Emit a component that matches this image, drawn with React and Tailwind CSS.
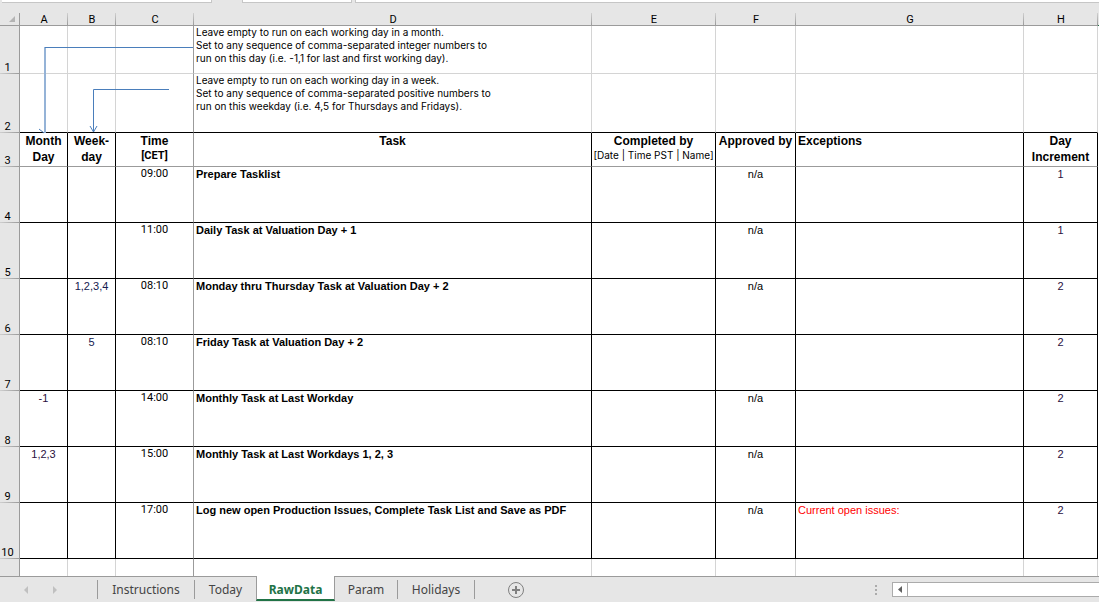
const LETTERS = ["A", "B", "C", "D", "E", "F", "G", "H"];

const TASKS = [
  { row: 4, time: "09:00", task: "Prepare Tasklist", approved: "n/a", increment: 1 },
  { row: 5, time: "11:00", task: "Daily Task at Valuation Day + 1", approved: "n/a", increment: 1 },
  { row: 6, weekday: "1,2,3,4", time: "08:10", task: "Monday thru Thursday Task at Valuation Day + 2", approved: "n/a", increment: 2 },
  { row: 7, weekday: "5", time: "08:10", task: "Friday Task at Valuation Day + 2", increment: 2 },
  { row: 8, monthDay: "-1", time: "14:00", task: "Monthly Task at Last Workday", approved: "n/a", increment: 2 },
  { row: 9, monthDay: "1,2,3", time: "15:00", task: "Monthly Task at Last Workdays 1, 2, 3", approved: "n/a", increment: 2 },
  {
    row: 10,
    time: "17:00",
    task: "Log new open Production Issues, Complete Task List and Save as PDF",
    approved: "n/a",
    exceptions: "Current open issues:",
    increment: 2,
  },
];

const RowNumber = ({ children }) => (
  <th
    scope="row"
    className="border-r border-[#9b9b9b] bg-[#e6e6e6] bg-[linear-gradient(to_right,#cfcfcf,#9b9b9b)] bg-[length:100%_1px] bg-bottom bg-no-repeat pr-1 align-bottom font-['Roboto',sans-serif] font-normal leading-[13px]"
  >
    {children}
  </th>
);

const GridCell = ({ children, frozen }) => (
  <td
    className={`border-r border-b border-b-[#d4d4d4] px-0.5 text-left align-top font-['Inter',sans-serif] text-[10px] leading-[13px] ${
      frozen ? "border-r-[#9b9b9b]" : "border-r-[#d4d4d4]"
    }`}
  >
    {children}
  </td>
);

const HeadCell = ({ children, className = "" }) => (
  <th
    scope="col"
    className={`border-r border-b border-b-[#9b9b9b] align-top text-xs font-bold leading-4 ${className || "border-r-black"}`}
  >
    {children}
  </th>
);

const TaskCell = ({ children, className = "pt-px" }) => (
  <td className={`border-r border-b border-black align-top leading-[13px] ${className}`}>
    {children}
  </td>
);

// Connectors from the notes in column D to the Month Day / Weekday headings
const Connectors = () => (
  <svg
    className="pointer-events-none absolute top-0 left-5"
    width="173"
    height="121"
    fill="none"
    stroke="#4a7ebb"
    aria-hidden="true"
  >
    <path d="M25 34V120" stroke="#95b3d7" strokeWidth="2" />
    <path d="M173 34.5H25" />
    <path d="M19 116l5 4" />
    <path d="M149 76.5H73.5V119" />
    <path d="M70 113l3.5 6 3.5-6" />
  </svg>
);

const FormulaBar = () => (
  <div className="flex h-[13px] items-start">
    <div className="ml-0.5 h-[3px] w-[210px] border-r border-b border-[#c6c6c6] bg-white" />
    <div className="ml-[30px] h-[3px] w-[110px] border-x border-b border-[#c6c6c6] bg-white" />
    <div className="ml-[3px] h-[3px] grow border-b border-l border-[#c6c6c6] bg-white" />
  </div>
);

const Sheet = () => (
  <div className="relative">
    <table className="w-full table-fixed border-separate border-spacing-0 bg-white text-center text-[11px] text-black">
      <colgroup>
        <col className="w-5" />
        <col className="w-12" />
        <col className="w-12" />
        <col className="w-[78px]" />
        <col />
        <col className="w-[124px]" />
        <col className="w-20" />
        <col className="w-[228px]" />
        <col className="w-[74px]" />
        <col className="w-px" />
      </colgroup>
      <tbody>
        <tr className="h-[13px] bg-[#e6e6e6]">
          <td className="border-r border-b border-[#9b9b9b] pr-1">
            <svg className="ml-auto" width="6" height="6" aria-hidden="true">
              <path d="M6 0V6H0Z" fill="#b4b4b4" />
            </svg>
          </td>
          {LETTERS.map((letter) => (
            <th
              key={letter}
              scope="col"
              className="border-b border-[#9b9b9b] bg-[linear-gradient(#cfcfcf,#9b9b9b)] bg-[length:1px_100%] bg-right bg-no-repeat pt-0.5 font-['Roboto',sans-serif] font-normal leading-[10px]"
            >
              {letter}
            </th>
          ))}
          <td className="border-b border-[#217346]" />
        </tr>
        <tr className="h-12">
          <RowNumber>1</RowNumber>
          <GridCell />
          <GridCell />
          <GridCell frozen />
          <GridCell>
            Leave empty to run on each working day in a month.
            <br />
            Set to any sequence of comma-separated integer numbers to
            <br />
            run on this day (i.e. -1,1 for last and first working day).
          </GridCell>
          <GridCell />
          <GridCell />
          <GridCell />
          <GridCell />
          <td />
        </tr>
        <tr className="h-[59px] [&>td]:border-b-black">
          <RowNumber>2</RowNumber>
          <GridCell />
          <GridCell />
          <GridCell frozen />
          <GridCell>
            Leave empty to run on each working day in a week.
            <br />
            Set to any sequence of comma-separated positive numbers to
            <br />
            run on this weekday (i.e. 4,5 for Thursdays and Fridays).
          </GridCell>
          <GridCell />
          <GridCell />
          <GridCell />
          <GridCell />
          <td />
        </tr>
        <tr className="h-[34px]">
          <RowNumber>3</RowNumber>
          <HeadCell>
            Month
            <br />
            Day
          </HeadCell>
          <HeadCell>
            Week-
            <br />
            day
          </HeadCell>
          <HeadCell className="border-r-[#9b9b9b]">
            Time
            <div className="font-['Roboto',sans-serif] text-[11px] leading-[13px]">[CET]</div>
          </HeadCell>
          <HeadCell>Task</HeadCell>
          <HeadCell>
            Completed by
            <div className="font-['Inter',sans-serif] text-[10px] font-normal leading-[13px]">
              [Date | Time PST | Name]
            </div>
          </HeadCell>
          <HeadCell>Approved by</HeadCell>
          <HeadCell className="border-r-black pl-0.5 text-left">Exceptions</HeadCell>
          <HeadCell>
            Day
            <br />
            Increment
          </HeadCell>
          <td />
        </tr>
        {TASKS.map((t) => (
          <tr key={t.row} className="h-14">
            <RowNumber>{t.row}</RowNumber>
            <TaskCell className="pt-px text-[#2a1040]">{t.monthDay}</TaskCell>
            <TaskCell className="pt-px text-[#14204f]">{t.weekday}</TaskCell>
            <TaskCell className="border-r-[#9b9b9b] font-['Roboto',sans-serif]">{t.time}</TaskCell>
            <TaskCell className="pt-px pl-0.5 text-left font-bold">{t.task}</TaskCell>
            <TaskCell />
            <TaskCell>{t.approved}</TaskCell>
            <TaskCell className="pt-px pl-0.5 text-left text-[#ff0000]">{t.exceptions}</TaskCell>
            <TaskCell className="pt-px text-[#2a1040]">{t.increment}</TaskCell>
            <td />
          </tr>
        ))}
        <tr className="h-[17px]">
          <td className="border-r border-[#9b9b9b] bg-[#e6e6e6]" />
          {LETTERS.map((letter) => (
            <td
              key={letter}
              className={`border-r ${letter === "C" ? "border-[#9b9b9b]" : "border-[#d4d4d4]"}`}
            />
          ))}
          <td />
        </tr>
      </tbody>
    </table>
    <Connectors />
  </div>
);

const SheetTab = ({ children, className }) => (
  <button
    type="button"
    className={`my-[3px] border-r border-[#9b9b9b] text-center text-[#444] ${className}`}
  >
    {children}
  </button>
);

const TabBar = () => (
  <div className="flex h-[26px] border-t border-[#9b9b9b] font-['Noto_Sans',sans-serif] text-xs leading-4">
    <div className="my-[3px] flex w-[98px] items-center border-r border-[#9b9b9b] pl-6">
      <button type="button" aria-label="Previous sheets">
        <svg width="4" height="8">
          <path d="M4 0V8L0 4Z" fill="#c0c0c0" />
        </svg>
      </button>
      <button type="button" aria-label="Next sheets" className="ml-[25px]">
        <svg width="4" height="8">
          <path d="M0 0V8L4 4Z" fill="#c0c0c0" />
        </svg>
      </button>
    </div>
    <SheetTab className="w-[97px]">Instructions</SheetTab>
    <button type="button" className="w-[61px] text-center text-[#444]">
      Today
    </button>
    <button
      type="button"
      className="-mt-px mb-px w-[79px] border-x border-b-2 border-x-[#9b9b9b] border-b-[#217346] bg-white pt-1 text-center font-bold text-[#217346]"
    >
      RawData
    </button>
    <SheetTab className="w-[63px]">Param</SheetTab>
    <SheetTab className="w-[77px]">Holidays</SheetTab>
    <button type="button" aria-label="New sheet" className="ml-8 self-center">
      <svg width="18" height="18" fill="none" stroke="#808080">
        <circle cx="9" cy="9" r="7.5" />
        <path d="M9 5V13M5 9H13" strokeWidth="2" />
      </svg>
    </button>
    <div className="ml-auto flex items-center">
      <svg width="2" height="10" fill="#ababab" aria-hidden="true">
        <path d="M0 0h2v2H0zM0 4h2v2H0zM0 8h2v2H0z" />
      </svg>
      <button
        type="button"
        aria-label="Scroll left"
        className="ml-[15px] flex h-[15px] w-4 items-center justify-center border border-[#ababab] bg-white"
      >
        <svg width="4" height="7">
          <path d="M4 0V7L0 3.5Z" fill="#606060" />
        </svg>
      </button>
      <div className="h-[15px] w-[191px] border-y border-[#ababab] bg-white" />
    </div>
  </div>
);

const App = () => (
  <main className="min-h-screen bg-[#e6e6e6] font-['Liberation_Sans',Arial,sans-serif]">
    <FormulaBar />
    <Sheet />
    <TabBar />
  </main>
);

export default App;
